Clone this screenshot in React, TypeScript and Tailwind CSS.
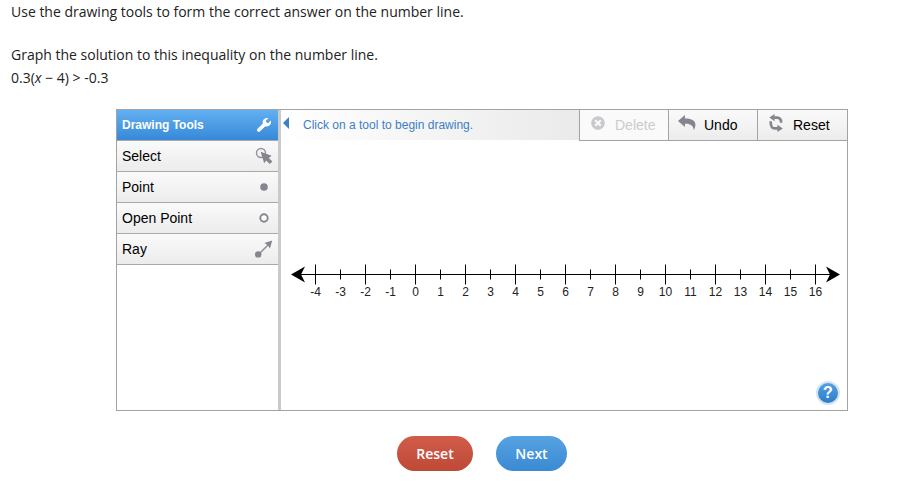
import { useState } from 'react';
import { FaTimesCircle } from 'react-icons/fa';

const ticks = Array.from({ length: 21 }, (_, i) => i - 4);

function WrenchIcon() {
  return (
    <svg width="16" height="16" viewBox="0 0 16 16" aria-hidden="true">
      <path d="M2.8 13L9.4 6.6" stroke="#fff" strokeWidth="3.6" strokeLinecap="round" />
      <path d="M12.4 1.2L9.8 3.8L10.2 5.8L12.2 6.2L14.8 3.6C15.6 6.6 14 9.4 10.8 9.4C8.4 9.4 6.6 7.8 6.6 5.4C6.6 2.2 9.4 0.4 12.4 1.2Z" fill="#fff" />
    </svg>
  );
}

function SelectIcon() {
  return (
    <svg width="18" height="18" viewBox="0 0 18 18" aria-hidden="true">
      <circle cx="6" cy="6" r="4.5" fill="none" stroke="#92929c" strokeWidth="1.4" />
      <path d="M5.6 4.8L16.6 8.8L13.8 11L17.4 14.6L14.8 17L11.2 13.4L9.2 16.2Z" fill="#858590" />
    </svg>
  );
}

function PointIcon() {
  return <svg width="18" height="18" viewBox="0 0 18 18" aria-hidden="true"><circle cx="9" cy="9" r="3.8" fill="#858590" /></svg>;
}

function OpenPointIcon() {
  return <svg width="18" height="18" viewBox="0 0 18 18" aria-hidden="true"><circle cx="9" cy="9" r="3.7" fill="#fff" stroke="#858590" strokeWidth="1.9" /></svg>;
}

function RayIcon() {
  return (
    <svg width="18" height="18" viewBox="0 0 18 18" aria-hidden="true">
      <path d="M3 15L13 5" stroke="#92929c" strokeWidth="1.6" />
      <circle cx="3.2" cy="14.4" r="3.2" fill="#858590" />
      <path d="M17.2 0.6L15 8.4L12.8 5.2L9.4 3Z" fill="#858590" />
    </svg>
  );
}

function UndoIcon() {
  return (
    <svg width="18" height="16" viewBox="0 0 18 16" aria-hidden="true">
      <path d="M0 6L7 0V3.6C13.5 3.4 17.5 5.8 17.4 9.6C17.4 11.8 16.8 13.6 15.8 15.2C15.4 10.8 12.8 8.6 7 8.8V12Z" fill="#858590" />
    </svg>
  );
}

function ResetIcon() {
  return (
    <svg width="16" height="18" viewBox="0 0 16 18" aria-hidden="true">
      <g fill="none" stroke="#858590" strokeWidth="2.6">
        <path d="M5 3.6H9C12 3.6 13.2 5.2 13.2 8.8" />
        <path d="M11 14.4H7C4 14.4 2.6 12.8 2.6 7.2" />
      </g>
      <path d="M1.4 3.6L6.6 0V7.2ZM14.8 14.4L9.4 10.8V18Z" fill="#858590" />
    </svg>
  );
}

const tools = [
  { name: 'Select', icon: <SelectIcon /> },
  { name: 'Point', icon: <PointIcon /> },
  { name: 'Open Point', icon: <OpenPointIcon /> },
  { name: 'Ray', icon: <RayIcon /> },
];

function NumberLine() {
  return (
    <svg className="block w-full mt-[113px]" viewBox="0 0 566 60" role="img" aria-label="Number line from -4 to 16">
      <path d="M18 20.5H552" stroke="#000" />
      <path d="M10 20.5L24 12.5L20 20.5L24 28.5Z M559 20.5L545 12.5L549 20.5L545 28.5Z" />
      {ticks.map((n, i) => {
        const x = 34.5 + i * 25;
        const half = n % 2 === 0 ? 10 : 5;
        return (
          <g key={n}>
            <path d={`M${x} ${20.5 - half}V${20.5 + half}`} stroke="#000" />
            <text x={x} y="42" textAnchor="middle" fontSize="12" fill="#222">{n}</text>
          </g>
        );
      })}
    </svg>
  );
}

export default function App() {
  const [tool, setTool] = useState<string | null>(null);

  return (
    <main className="bg-white text-[#222] font-['Open_Sans',sans-serif]">
      <div className="px-[11px] pt-px text-sm leading-[22px]">
        <p>Use the drawing tools to form the correct answer on the number line.</p>
        <p className="mt-[21px]">Graph the solution to this inequality on the number line.</p>
        <p className="mt-px">0.3(<i>x</i> − 4) &gt; -0.3</p>
      </div>

      <div className="pl-11 mt-5 flex flex-col items-center">
        <section className="flex w-full max-w-[732px] min-h-[302px] border border-[#a3a3a3] font-['Liberation_Sans',Arial,sans-serif] text-black">
          <aside className="w-[164px] shrink-0 border-r-3 border-[#cacaca]">
            <h2 className="flex h-[30px] items-center justify-between pl-[5px] pr-[6px] bg-linear-to-b from-[#62b0f2] to-[#3689d8] text-xs font-bold text-white">
              Drawing Tools
              <WrenchIcon />
            </h2>
            {tools.map((t) => (
              <button key={t.name} onClick={() => setTool(t.name)} aria-pressed={tool === t.name}
                className="flex h-[31px] w-full items-center justify-between pl-[5px] pr-[5px] border-b border-[#a9a9a9] bg-linear-to-b from-[#fafafa] to-[#ececec] text-sm first-of-type:border-t first-of-type:h-8">
                {t.name}
                {t.icon}
              </button>
            ))}
          </aside>

          <div className="flex min-w-0 flex-1 flex-col">
            <div className="flex h-[31px]">
              <div className="flex h-[30px] flex-1 items-center bg-linear-to-r from-white to-[#eaeaea] pl-[2px] text-xs text-[#3d7fc4]">
                <svg width="6" height="12" viewBox="0 0 6 12" className="mb-1" aria-hidden="true"><path d="M6 0V12L0 6Z" fill="#3a82c8" /></svg>
                <span className="ml-[14px]">Click on a tool to begin drawing.</span>
              </div>
              <button disabled className="flex w-[89px] items-center border-l border-b border-[#a3a3a3] bg-[#fafafa] pl-[11px] text-sm text-[#ccc]">
                <FaTimesCircle size={14} className="mr-[10px] mb-1 text-[#c9c9cd]" />
                Delete
              </button>
              <button className="flex w-[89px] items-center border-l border-b border-[#a3a3a3] bg-linear-to-b from-[#fafafa] to-[#ececec] pl-[9px] text-sm">
                <span className="mr-2 mb-1"><UndoIcon /></span>
                Undo
              </button>
              <button onClick={() => setTool(null)} className="flex w-[90px] items-center border-l border-b border-[#a3a3a3] bg-linear-to-b from-[#fafafa] to-[#ececec] pl-[10px] text-sm">
                <span className="mr-[9px] mb-1"><ResetIcon /></span>
                Reset
              </button>
            </div>
            <NumberLine />
            <div className="mt-auto flex justify-end pr-[7px] pb-[5px]">
              <button aria-label="Help" className="size-6 rounded-full border-2 border-[#d3e5f5] bg-linear-to-b from-[#559fdf] to-[#2c7dcb] text-base leading-5 font-bold text-white">?</button>
            </div>
          </div>
        </section>

        <div className="mt-[25px] flex gap-[23px] text-sm font-semibold text-white">
          <button className="h-[35px] w-[76px] rounded-full bg-linear-to-b from-[#d05c49] to-[#bd4936]">Reset</button>
          <button className="h-[35px] w-[71px] rounded-full bg-linear-to-b from-[#56a3e2] to-[#3a8ad3]">Next</button>
        </div>
      </div>
    </main>
  );
}
